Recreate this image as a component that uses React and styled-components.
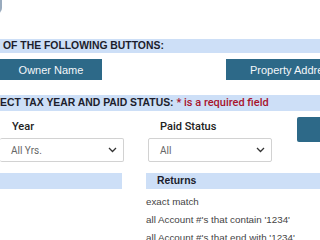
import React from "react";
import styled, { createGlobalStyle } from "styled-components";

const Global = createGlobalStyle`
  html, body { margin: 0; padding: 0; background: #fff; overflow: hidden; }
  body { font-family: "Liberation Sans", Arial, sans-serif; width: 320px; height: 240px; }
`;

const Page = styled.div`
  width: 320px;
  height: 240px;
  overflow: hidden;
  position: relative;
`;

const TopStub = styled.div`
  width: 12px;
  height: 14px;
  margin-left: -10.5px;
  background: #6d88a2;
  border-radius: 0 0 6px 0;
  opacity: 0.7;
`;

const Band = styled.div`
  background: #cddff7;
  height: ${(p) => p.$h || 14}px;
  line-height: ${(p) => p.$h || 14}px;
  font-weight: bold;
  font-size: 10.4px;
  color: #1c1d2c;
  padding-left: ${(p) => p.$pad || 0}px;
  margin-top: ${(p) => p.$mt || 0}px;
  white-space: nowrap;
  overflow: hidden;
`;

const Required = styled.span`
  font-family: Roboto, "Liberation Sans", sans-serif;
  font-weight: 500;
  font-size: 11px;
  color: #a8142d;
`;

const ButtonRow = styled.div`
  display: flex;
  margin-top: 6px;
  height: 21px;
`;

const ActionButton = styled.div`
  flex: none;
  width: ${(p) => p.$w}px;
  margin-left: ${(p) => p.$ml || 0}px;
  height: 21px;
  background: #2d6988;
  color: #f4f7fa;
  font-size: 11px;
  display: flex;
  align-items: center;
  justify-content: ${(p) => (p.$left ? "flex-start" : "center")};
  padding-left: ${(p) => p.$pl || 0}px;
  box-sizing: border-box;
  white-space: nowrap;
  overflow: hidden;
`;

const FormGrid = styled.div`
  display: grid;
  grid-template-columns: 124px 124px 23px;
  column-gap: 24px;
  margin-top: 6px;
  height: 45px;
`;

const Field = styled.div`
  display: flex;
  flex-direction: column;
  padding-top: 3px;
`;

const Label = styled.div`
  font-family: Roboto, "Liberation Sans", sans-serif;
  font-weight: 500;
  font-size: 11px;
  line-height: 14px;
  color: #222;
  padding-left: ${(p) => p.$pl || 0}px;
  height: 14px;
`;

const Select = styled.div`
  margin-top: 4px;
  height: 24px;
  box-sizing: border-box;
  border: 1px solid #d2d2d2;
  border-left: ${(p) => (p.$noLeft ? "none" : "1px solid #d2d2d2")};
  border-radius: 2px;
  display: flex;
  align-items: center;
  justify-content: space-between;
  padding: 0 6px 0 ${(p) => p.$pl || 10}px;
  font-family: Roboto, "Liberation Sans", sans-serif;
  font-size: 10px;
  color: #666;
`;

const Chevron = () => (
  <svg width="9" height="6" viewBox="0 0 9 6">
    <path d="M1 1 L4.5 4.5 L8 1" fill="none" stroke="#333" strokeWidth="1.3" />
  </svg>
);

const GoButton = styled.div`
  width: 30px;
  height: 25px;
  background: #2d6988;
  margin-top: 0;
  margin-left: 1px;
  border-radius: 2px 0 0 2px;
`;

const BandRow = styled.div`
  display: grid;
  grid-template-columns: 122px 1fr;
  column-gap: 24px;
  margin-top: 11px;
`;

const Returns = styled.div`
  margin-left: 146px;
  margin-top: 4px;
  font-size: 9.8px;
  line-height: 18px;
  color: #444;
  white-space: nowrap;
`;

export default function App() {
  return (
    <Page>
      <Global />
      <TopStub />
      <Band $mt={25} $pad={3}>OF THE FOLLOWING BUTTONS:</Band>
      <ButtonRow>
        <ActionButton $w={102}>Owner Name</ActionButton>
        <ActionButton $w={110} $ml={124} $left $pl={24}>Property Address</ActionButton>
      </ButtonRow>
      <Band $mt={15} $h={16}>
        ECT TAX YEAR AND PAID STATUS: <Required>* is a required field</Required>
      </Band>
      <FormGrid>
        <Field>
          <Label $pl={12}>Year</Label>
          <Select $noLeft $pl={11}>
            <span>All Yrs.</span>
            <Chevron />
          </Select>
        </Field>
        <Field>
          <Label $pl={12}>Paid Status</Label>
          <Select $pl={11}>
            <span>All</span>
            <Chevron />
          </Select>
        </Field>
        <GoButton />
      </FormGrid>
      <BandRow>
        <Band $h={16} />
        <Band $h={16} $pad={11}>Returns</Band>
      </BandRow>
      <Returns>
        <div>exact match</div>
        <div>all Account #'s that contain '1234'</div>
        <div>all Account #'s that end with '1234'</div>
      </Returns>
    </Page>
  );
}
